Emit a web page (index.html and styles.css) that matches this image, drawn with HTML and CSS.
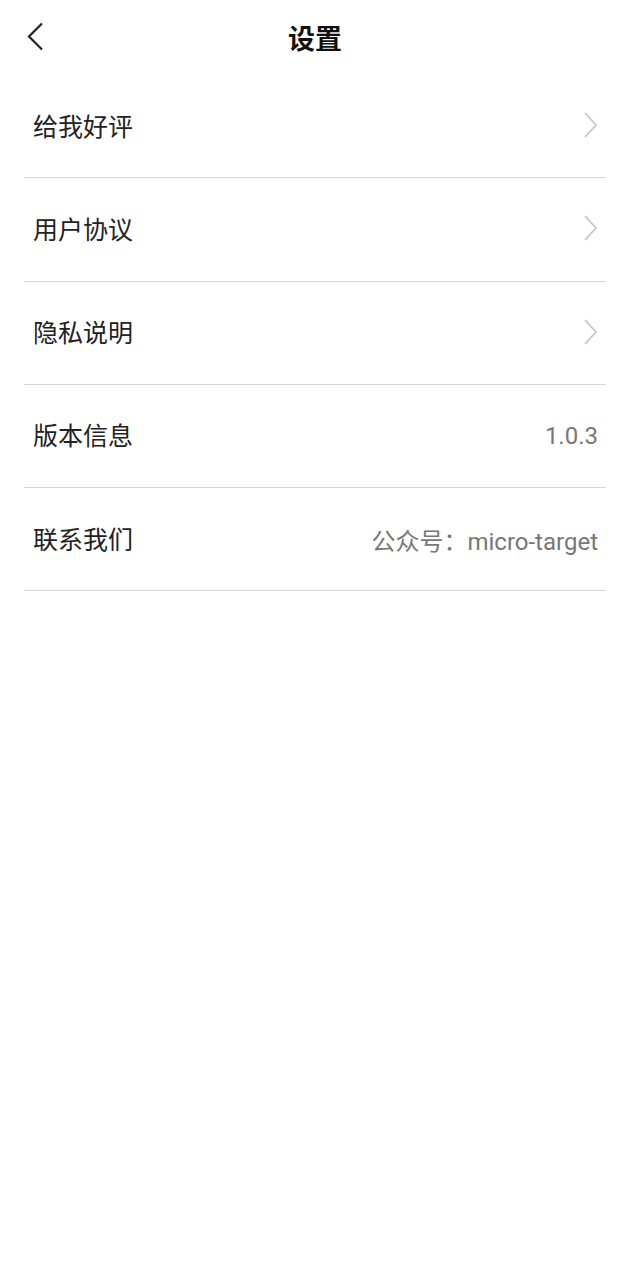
FILE: index.html
```html
<!DOCTYPE html>
<html lang="zh-CN">
<head>
    <meta charset="UTF-8">
    <meta name="viewport" content="width=device-width, initial-scale=1.0">
    <title>设置</title>
    <link rel="stylesheet" href="styles.css">
</head>
<body>
    <div class="header">
        <div class="back">
            <svg width="18" height="30" viewBox="0 0 18 30">
                <polyline points="15,1.5 2,14.5 15,27.5" fill="none" stroke="#222" stroke-width="2.2"/>
            </svg>
        </div>
        <h1>设置</h1>
        <div></div>
    </div>
    <ul class="list">
        <li class="item">
            <span class="label">给我好评</span>
            <svg class="arrow" width="16" height="28" viewBox="0 0 16 28">
                <polyline points="2,2 13,14 2,26" fill="none" stroke="#c6c6c6" stroke-width="1.8"/>
            </svg>
        </li>
        <li class="item">
            <span class="label">用户协议</span>
            <svg class="arrow" width="16" height="28" viewBox="0 0 16 28">
                <polyline points="2,2 13,14 2,26" fill="none" stroke="#c6c6c6" stroke-width="1.8"/>
            </svg>
        </li>
        <li class="item">
            <span class="label">隐私说明</span>
            <svg class="arrow" width="16" height="28" viewBox="0 0 16 28">
                <polyline points="2,2 13,14 2,26" fill="none" stroke="#c6c6c6" stroke-width="1.8"/>
            </svg>
        </li>
        <li class="item">
            <span class="label">版本信息</span>
            <span class="value">1.0.3</span>
        </li>
        <li class="item">
            <span class="label">联系我们</span>
            <span class="value">公众号：micro-target</span>
        </li>
    </ul>
</body>
</html>
```

FILE: styles.css
```css
body {
    margin: 0;
    background-color: #fff;
    font-family: Roboto, "Noto Sans CJK SC", sans-serif;
    color: #222;
}
.header {
    display: grid;
    grid-template-columns: 1fr auto 1fr;
    align-items: center;
    height: 75px;
    box-sizing: border-box;
}
.back {
    padding-left: 27px;
    display: flex;
    align-items: center;
    margin-top: -1px;
}
.header h1 {
    margin: 0;
    font-size: 27px;
    font-weight: bold;
    color: #111;
}
.list {
    list-style: none;
    margin: 0 24px;
    padding: 0;
}
.item {
    display: flex;
    justify-content: space-between;
    align-items: center;
    height: 102.25px;
    border-bottom: 1px solid #d6d6d6;
    padding: 0 8px 0 9px;
}
.label {
    font-size: 25px;
    color: #222;
    margin-top: -3px;
}
.value {
    font-size: 24px;
    color: #777;
}
.arrow {
    margin-right: -1px;
    margin-top: -2px;
}
```
